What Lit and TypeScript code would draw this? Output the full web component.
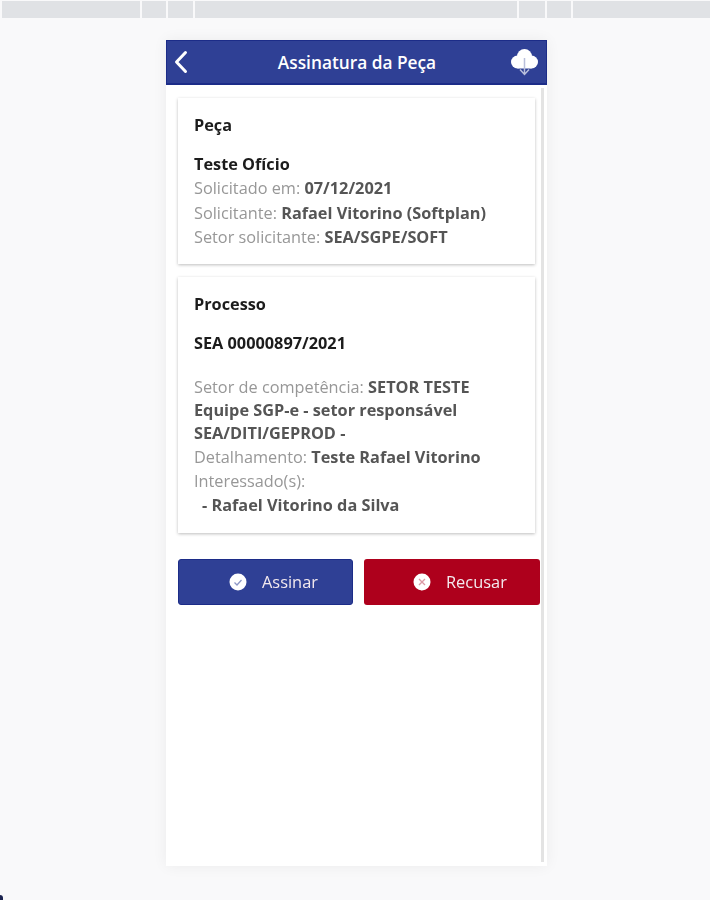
import { LitElement, html, css } from "lit";
import { customElement } from "lit/decorators.js";

@customElement("app-root")
export class AppRoot extends LitElement {
  static styles = css`
    :host {
      display: block;
      height: 900px;
      background: #f9f9fa;
      font-family: "Open Sans", "Liberation Sans", sans-serif;
      overflow: hidden;
      position: relative;
    }
    .page { height: 900px; filter: blur(0.6px); }
    .top {
      display: flex;
      gap: 1.5px;
      height: 16.5px;
      padding: 1px 0 0 2px;
    }
    .top div { background: #e0e2e5; }
    .s1 { width: 138px; } .s2 { width: 24.5px; } .s3 { width: 25.5px; }
    .s4 { width: 322.5px; } .s5 { width: 26.5px; } .s6 { width: 24.5px; }
    .s7 { flex: 1; }
    .phone {
      width: 381px;
      height: 826px;
      margin: 22.5px 0 0 166px;
      background: #fff;
      box-shadow: 0 0 14px rgba(0, 0, 0, 0.06);
      display: flex;
      flex-direction: column;
    }
    .head {
      height: 45px;
      box-sizing: border-box;
      background: #2f4095;
      border: 1px solid #1c2c88;
      border-width: 1px 1px 2px 1px;
      display: flex;
      align-items: center;
      justify-content: space-between;
      padding: 0 7px 0 6px;
      color: #fff;
      font-size: 17.3px;
      font-weight: 600;
    }
    .head svg { display: block; }
    .back { margin-right: 15px; }
    .body {
      flex: 1;
      display: flex;
      padding: 3px 3px 4px 12px;
      gap: 6px;
      min-height: 0;
    }
    .content {
      flex: 1;
      display: flex;
      flex-direction: column;
      padding-top: 10px;
      min-width: 0;
    }
    .track { width: 3px; background: #e3e3e3; }
    .card {
      width: 357px;
      box-sizing: border-box;
      background: #fff;
      box-shadow: 0 1px 3px rgba(0, 0, 0, 0.26);
      padding: 15px 16px;
      font-size: 16.3px;
      line-height: 24.4px;
      color: #979797;
    }
    .card + .card { margin-top: 13px; padding-bottom: 15.6px; line-height: 24px; }
    .card b { font-weight: 700; color: #555; }
    .title { color: #1c1c1c; font-weight: 700; line-height: 24.4px; }
    .gap1 { margin-top: 15px; }
    .card + .card .gap1 { margin-top: 14px; }
    .shift { margin-top: -0.6px; }
    .gap2 { margin-top: 21px; }
    .tight { line-height: 23px; }
    .indent { padding-left: 8px; }
    .actions {
      display: flex;
      gap: 11px;
      margin-top: 26px;
    }
    .btn {
      flex: none;
      width: 175px;
      height: 46px;
      box-sizing: border-box;
      border-radius: 3px;
      color: #f3e9ee;
      font-size: 16.4px;
      display: flex;
      align-items: center;
      gap: 15px;
      padding-left: 50px;
    }
    .btn svg { display: block; }
    .ok { background: #2f4095; border: 1px solid #1c2c88; }
    .no { width: 176px; background: #ae001c; padding-left: 49px; }
    .corner {
      position: absolute;
      left: 0;
      bottom: 0;
      width: 3px;
      height: 5px;
      background: #1c2450;
      border-top-right-radius: 3px;
    }
  `;

  render() {
    return html`
      <div class="page">
        <div class="top">
          <div class="s1"></div><div class="s2"></div><div class="s3"></div><div class="s4"></div>
          <div class="s5"></div><div class="s6"></div><div class="s7"></div>
        </div>
        <div class="phone">
          <div class="head">
            <svg class="back" width="16" height="24" viewBox="0 0 16 24" fill="none" stroke="#fff" stroke-width="3" stroke-linecap="round" stroke-linejoin="round"><path d="M12.5 2.5 3.5 12l9 9.5"/></svg>
            <span>Assinatura da Peça</span>
            <svg width="29" height="28" viewBox="0 0 29 28">
              <g fill="#fff">
                <circle cx="14.5" cy="8.5" r="7.5"/>
                <circle cx="7.5" cy="14" r="6.5"/>
                <circle cx="21.5" cy="14" r="6.5"/>
                <rect x="7.5" y="10" width="14" height="10.5"/>
              </g>
              <path fill="none" stroke="#b9bfdb" stroke-width="1.5" d="M14.5 10v16M10 21.5l4.5 5 4.5-5"/>
            </svg>
          </div>
          <div class="body">
            <div class="content">
              <div class="card">
                <div class="title">Peça</div>
                <div class="title gap1">Teste Ofício</div>
                <div class="shift">Solicitado em: <b>07/12/2021</b></div>
                <div>Solicitante: <b>Rafael Vitorino (Softplan)</b></div>
                <div>Setor solicitante: <b>SEA/SGPE/SOFT</b></div>
              </div>
              <div class="card">
                <div class="title">Processo</div>
                <div class="title gap1">SEA 00000897/2021</div>
                <div class="gap2 tight">
                  <div>Setor de competência: <b>SETOR TESTE</b></div>
                  <div><b>Equipe SGP-e - setor responsável</b></div>
                  <div><b>SEA/DITI/GEPROD -</b></div>
                </div>
                <div>Detalhamento: <b>Teste Rafael Vitorino</b></div>
                <div>Interessado(s):</div>
                <div class="indent"><b>- Rafael Vitorino da Silva</b></div>
              </div>
              <div class="actions">
                <div class="btn ok">
                  <svg width="18" height="18" viewBox="0 0 18 18"><circle cx="9" cy="9" r="8.5" fill="#fff"/><path d="M5.5 9.5 8 12l4.5-5" fill="none" stroke="#8d97c6" stroke-width="1.3"/></svg>
                  <span>Assinar</span>
                </div>
                <div class="btn no">
                  <svg width="18" height="18" viewBox="0 0 18 18"><circle cx="9" cy="9" r="8.5" fill="#fff"/><path d="m6 6 6 6m0-6-6 6" fill="none" stroke="#dc9aa6" stroke-width="1.3"/></svg>
                  <span>Recusar</span>
                </div>
              </div>
            </div>
            <div class="track"></div>
          </div>
        </div>
      </div>
      <div class="corner"></div>
    `;
  }
}
